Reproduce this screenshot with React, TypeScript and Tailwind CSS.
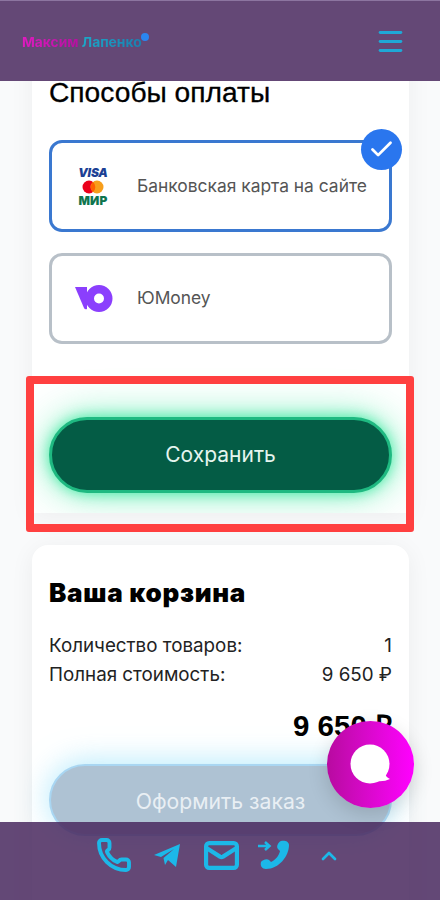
import { Check, ChevronUp, Menu, Phone, Mail } from "lucide-react";

function PaymentLogos() {
  return (
    <div className="flex w-[32px] flex-col items-center">
      <span className="font-['Inter',sans-serif] text-[12px] leading-[13px] font-black tracking-[-0.2px] italic text-[#1c3f94]">VISA</span>
      <svg width="24" height="14" viewBox="0 0 24 14" className="my-[1px]">
        <circle cx="8" cy="7" r="6.500" fill="#eb001b" />
        <circle cx="16" cy="7" r="6.500" fill="#f79e1b" />
        <path d="M12 2a6.500 6.500 0 0 1 0 10a6.500 6.500 0 0 1 0-10z" fill="#ff5f00" />
      </svg>
      <span className="font-['Inter',sans-serif] text-[12px] leading-[12px] font-black tracking-[0.2px] text-[#0f754e]">МИР</span>
    </div>
  );
}

function YooMoney() {
  return (
    <svg width="38" height="27" viewBox="0 0 38 27">
      <path d="M0 2 H12 V24 Q10 25 9 23 Z" fill="#8b3ffd" />
      <path fillRule="evenodd" d="M24 0a13.500 13.500 0 1 1 0 27a13.500 13.500 0 0 1 0-27zm0 8.500a5 5 0 1 0 0 10a5 5 0 0 0 0-10z" fill="#8b3ffd" />
    </svg>
  );
}

function Plane() {
  return (
    <svg width="27" height="25" viewBox="0 0 27 25" fill="#1cb8e8">
      <path d="M0 12 L26 1 L22 24 L14 17 L11 22 L9.500 15 L20 6 L7 14 Z" />
    </svg>
  );
}

function PhoneArrow() {
  return (
    <svg width="34" height="30" viewBox="0 0 34 30" fill="none">
      <path d="M1 6 H12 M8 2 L12.500 6 L8 10" stroke="#1cb8e8" strokeWidth="2.500" />
      <path d="M24 1 C27 0 32 1 32 5 C32 16 22 29 9 29 C5 29 3 26 4 22 C5 20 10 18 12 20 L14 22 C18 20 22 16 23 11 L21 9 C19 7 21 2 24 1 Z" fill="#1cb8e8" />
    </svg>
  );
}

function Bubble() {
  return (
    <svg width="44" height="44" viewBox="0 0 44 44">
      <circle cx="20" cy="20" r="19.500" fill="#fff" />
      <path d="M26 37 Q34 38 40 35 Q35 33 35 28 Z" fill="#fff" />
    </svg>
  );
}

export default function App() {
  return (
    <div className="relative h-[900px] w-[440px] overflow-hidden bg-[#f9fafb] font-['Inter',sans-serif]">
      <div className="ml-8 w-[377px]">
        <section className="flex h-[513px] flex-col overflow-hidden bg-white px-[17px] pt-[76px] shadow-[0_4px_24px_rgba(0,0,0,0.05)]">
          <h2 className="font-['Liberation_Sans',sans-serif] text-[28.200px] leading-[32px] font-normal text-black [-webkit-text-stroke:0.3px_black]">Способы оплаты</h2>
          <div className="relative mt-8 flex h-[92px] shrink-0 items-center rounded-[13px] border-[3px] border-[#3a78d0] pl-[25px]">
            <PaymentLogos />
            <span className="ml-[28px] text-[17.400px] text-[#555]">Банковская карта на сайте</span>
            <span className="absolute top-[-14px] right-[-13px] flex h-[41px] w-[41px] items-center justify-center rounded-full bg-[#2a76ee]">
              <Check size={27} strokeWidth={2.500} className="text-white" />
            </span>
          </div>
          <div className="mt-[21px] flex h-[91px] shrink-0 items-center rounded-[13px] border-[3px] border-[#b8c0c8] pl-[23px]">
            <YooMoney />
            <span className="ml-[24px] text-[17.400px] text-[#555]">ЮMoney</span>
          </div>
          <button className="mt-[73px] flex h-[76px] shrink-0 items-center justify-center rounded-full border-[3px] border-[#1fb981] bg-[#045c45] text-[21px] text-[#e6f5ef] shadow-[0_0_14px_rgba(40,230,150,0.8),0_0_40px_rgba(40,230,150,0.6)]">Сохранить</button>
        </section>
        <section className="mt-8 h-[400px] rounded-t-[16px] bg-white px-[17px] pt-[30px] shadow-[0_4px_24px_rgba(0,0,0,0.06)]">
          <h2 className="font-['Inter',sans-serif] text-[26px] leading-[36px] font-black tracking-[0.7px] text-black">Ваша корзина</h2>
          <div className="mt-[20px] flex justify-between text-[18.800px] leading-[29px] text-[#222]"><span>Количество товаров:</span><span>1</span></div>
          <div className="flex justify-between text-[18.800px] leading-[29px] text-[#222]"><span>Полная стоимость:</span><span>9 650 ₽</span></div>
          <div className="mt-[17px] text-right font-['Liberation_Sans',sans-serif] text-[29.500px] leading-[40px] font-bold text-black">9 650 ₽</div>
          <button className="mt-[18px] flex h-[72px] w-full items-center justify-center rounded-full border-2 border-[#a9d6f2] bg-[#aec2d3] pt-1 text-[21.200px] text-[#e9eff4] shadow-[0_-2px_30px_rgba(130,220,250,0.6)]">Оформить заказ</button>
        </section>
      </div>

      <header className="absolute top-0 left-0 flex h-[81px] w-full items-center justify-between border-t border-[#8c75a0] bg-[#644876] pr-[34px] pl-[22px]">
        <div className="relative mt-[3px] text-[13.800px] font-bold whitespace-nowrap">
          <span className="bg-gradient-to-r from-[#e01ac0] to-[#b5109f] bg-clip-text text-transparent">Максим</span>{" "}
          <span className="bg-gradient-to-r from-[#1ca8c8] to-[#1a80b0] bg-clip-text text-transparent">Лапенко</span>
          <span className="absolute top-[1px] right-[-7px] h-[8px] w-[8px] rounded-full bg-[#2a86f0]" />
        </div>
        <Menu size={31} strokeWidth={2.300} className="mt-[1px] text-[#1fa8d6]" />
      </header>

      <footer className="absolute bottom-0 left-0 flex h-[78px] w-full items-start bg-[#49285e]/85 pt-[15px] pl-[96px]">
        <Phone size={36} strokeWidth={2.600} className="text-[#1cb8e8]" />
        <span className="mt-[6px] ml-[22px]"><Plane /></span>
        <Mail size={37} strokeWidth={2.700} className="ml-[22px] text-[#1cb8e8]" />
        <span className="mt-[3px] ml-[17px]"><PhoneArrow /></span>
        <ChevronUp size={24} strokeWidth={2.700} className="mt-[7px] ml-[26px] text-[#1cb8e8]" />
      </footer>

      <div className="absolute top-[721px] left-[327px] flex h-[87px] w-[87px] items-center justify-center rounded-full bg-gradient-to-r from-[#b80aa0] to-[#ff00ff] pl-[2px] pt-[2px] shadow-[0_6px_20px_rgba(0,0,0,0.15)]">
        <Bubble />
      </div>

      <div className="absolute top-[376px] left-[26px] h-[156px] w-[388px] rounded-[3px] border-[8px] border-[#ff4040]" />
    </div>
  );
}
